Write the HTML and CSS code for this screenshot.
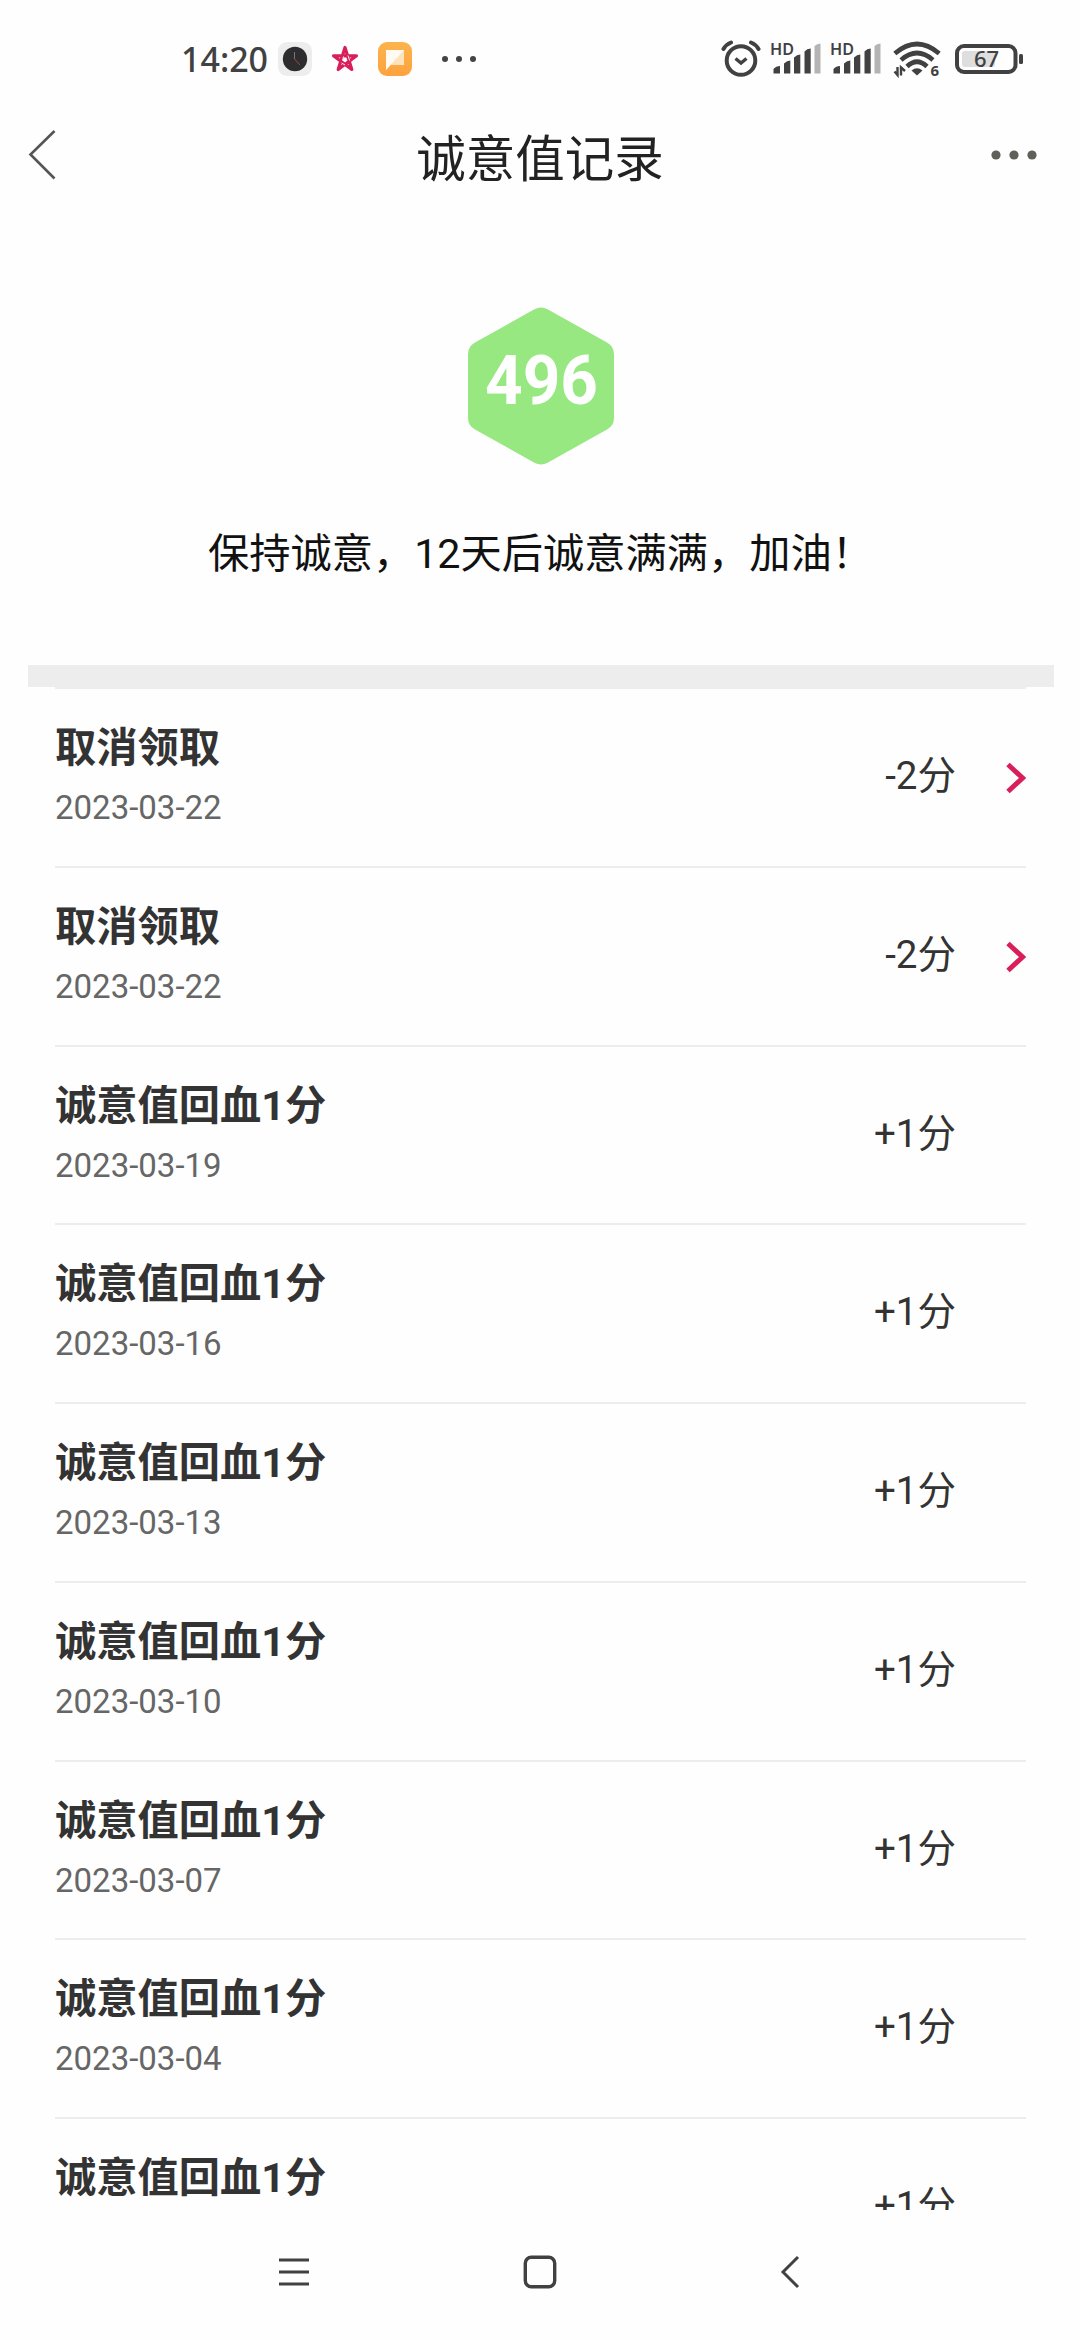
FILE: index.html
```html
<!DOCTYPE html>
<html lang="zh-CN">

<head>
    <meta charset="UTF-8">
    <meta name="viewport" content="width=device-width, initial-scale=1.0">
    <title>诚意值记录</title>
    <link rel="stylesheet" href="styles.css">
</head>

<body>
    <!-- 状态栏 -->
    <div class="statusbar">
        <div class="status-left">
            <span class="time">14:20</span>
            <svg class="app-icon" width="34" height="34" viewBox="0 0 34 34">
                <rect width="34" height="34" rx="9" fill="#ededed" />
                <circle cx="17" cy="17" r="12.2" fill="#2d2d2f" />
                <path d="M16.5 10v7" stroke="#777" stroke-width="1" fill="none" />
                <path d="M16.5 17l5.500 6" stroke="#a8433f" stroke-width="1" fill="none" />
            </svg>
            <svg class="star-icon" width="28" height="28" viewBox="0 0 28 28">
                <path d="M14 2.500L20.800 24.500L2.500 10.800H25.500L7.200 24.500Z" fill="none" stroke="#d81e5b" stroke-width="3.200" stroke-linejoin="round" />
                <path d="M12.500 11.500l-1 4M17 10.500l1.600 5M10.500 18l3.500 2" fill="none" stroke="#fff" stroke-width="0.900" />
            </svg>
            <svg class="app-icon" width="34" height="34" viewBox="0 0 34 34">
                <defs>
                    <linearGradient id="orange" x1="0" y1="0" x2="0" y2="1">
                        <stop offset="0" stop-color="#fbb44c" />
                        <stop offset="1" stop-color="#fea33e" />
                    </linearGradient>
                </defs>
                <rect width="34" height="34" rx="9" fill="url(#orange)" />
                <path d="M8 8h18v15H12.500L8 28Z" fill="#fde3bd" />
                <path d="M8 8h18L8 28Z" fill="#fffaf2" />
            </svg>
            <svg class="more-icon" width="36" height="8" viewBox="0 0 36 8">
                <g fill="#444">
                    <circle cx="4" cy="4" r="3" />
                    <circle cx="18" cy="4" r="3" />
                    <circle cx="32" cy="4" r="3" />
                </g>
            </svg>
        </div>
        <div class="status-right">
            <!-- 闹钟 -->
            <svg width="40" height="40" viewBox="0 0 40 40">
                <g fill="none" stroke="#414141" stroke-linecap="round">
                    <circle cx="20" cy="21.500" r="14.300" stroke-width="4" />
                    <path d="M14.500 19.500l5.500 4.500l5.500-4.500" stroke-width="3.400" stroke-linecap="butt" />
                    <path d="M2.500 10Q5 5.500 10 3.500M37.500 10Q35 5.500 30 3.500" stroke-width="4" />
                </g>
            </svg>
            <!-- 信号 -->
            <svg class="signal" width="50" height="40" viewBox="0 0 50 40">
                <text class="hd" x="-1" y="15.500" textLength="24" lengthAdjust="spacingAndGlyphs">HD</text>
                <g fill="#414141">
                    <path d="M2.500 34.500V30Q5 27 9 27V34.500Z" />
                    <path d="M13 34.500V24.500Q16 21.500 19.300 21.500V34.500Z" />
                    <path d="M23 34.500V18.500Q26 15.500 29.300 15.500V34.500Z" />
                    <path d="M33.500 34.500V12.500Q36 9.500 39.700 9.500V34.500Z" />
                    <path d="M43.500 34.500V7Q46 4.500 49.500 4.500V34.500Z" fill="#b4b4b4" />
                </g>
            </svg>
            <svg class="signal" width="50" height="40" viewBox="0 0 50 40">
                <text class="hd" x="-1" y="15.500" textLength="24" lengthAdjust="spacingAndGlyphs">HD</text>
                <g fill="#414141">
                    <path d="M2.500 34.500V30Q5 27 9 27V34.500Z" />
                    <path d="M13 34.500V24.500Q16 21.500 19.300 21.500V34.500Z" />
                    <path d="M23 34.500V18.500Q26 15.500 29.300 15.500V34.500Z" />
                    <path d="M33.500 34.500V12.500Q36 9.500 39.700 9.500V34.500Z" />
                    <path d="M43.500 34.500V7Q46 4.500 49.500 4.500V34.500Z" fill="#b4b4b4" />
                </g>
            </svg>
            <!-- wifi -->
            <svg class="wifi" width="48" height="40" viewBox="0 0 48 40">
                <g fill="none" stroke="#414141" stroke-width="4.600">
                    <path d="M1.800 14.500Q24 -4.500 46.200 14.500" />
                    <path d="M8 21Q24 7 40 21" />
                    <path d="M14 27.500Q24 18 34 27.500" />
                </g>
                <path d="M18.500 31.500Q24 27 29.500 31.500L24 36.500Z" fill="#414141" />
                <path d="M4.500 28v8L1.500 32.500M8 36.500v-8l4 3.500" fill="none" stroke="#414141" stroke-width="2.400" />
                <text class="wifi-num" x="37.500" y="36.800">6</text>
            </svg>
            <!-- 电量 -->
            <svg class="battery" width="69" height="32" viewBox="0 0 69 32">
                <rect x="2" y="3" width="58.500" height="26" rx="7" fill="none" stroke="#414141" stroke-width="4" />
                <rect x="7" y="8" width="33" height="16" rx="3" fill="#dedede" />
                <rect x="64" y="11" width="4" height="10" rx="1.500" fill="#414141" />
                <text class="battery-num" x="31.500" y="24" text-anchor="middle">67</text>
            </svg>
        </div>
    </div>

    <!-- 标题栏 -->
    <div class="header">
        <svg width="30" height="52" viewBox="0 0 30 52">
            <path d="M26.500 2L2.500 25.500L26.500 49.500" fill="none" stroke="#555" stroke-width="2.600" />
        </svg>
        <h1>诚意值记录</h1>
        <svg width="46" height="10" viewBox="0 0 46 10">
            <g fill="#5f6059">
                <circle cx="5" cy="5" r="4.600" />
                <circle cx="23" cy="5" r="4.600" />
                <circle cx="41" cy="5" r="4.600" />
            </g>
        </svg>
    </div>

    <!-- 当前分值 -->
    <div class="score">
        <svg width="148" height="160" viewBox="0 0 148 160">
            <path d="M67 3.500Q74 -0.500 81 3.500L140 36.500Q147 40.500 147 48V112Q147 119.500 140 123.500L81 156.500Q74 160.500 67 156.500L8 123.500Q1 119.500 1 112V48Q1 40.500 8 36.500Z" fill="#97e881" />
            <text class="score-num" x="18" y="98" textLength="113" lengthAdjust="spacingAndGlyphs">496</text>
        </svg>
        <p>保持诚意，12天后诚意满满，加油！</p>
    </div>

    <!-- 记录列表 -->
    <div class="records">
        <ul>
            <li>
                <div class="info">
                    <h2>取消领取</h2>
                    <span class="date">2023-03-22</span>
                </div>
                <span class="num">-2分</span>
                <svg class="arrow" width="20" height="32" viewBox="0 0 20 32">
                    <path d="M2 2.500L16.500 16L2 29.500" fill="none" stroke="#d81e5b" stroke-width="5" />
                </svg>
            </li>
            <li>
                <div class="info">
                    <h2>取消领取</h2>
                    <span class="date">2023-03-22</span>
                </div>
                <span class="num">-2分</span>
                <svg class="arrow" width="20" height="32" viewBox="0 0 20 32">
                    <path d="M2 2.500L16.500 16L2 29.500" fill="none" stroke="#d81e5b" stroke-width="5" />
                </svg>
            </li>
            <li>
                <div class="info">
                    <h2>诚意值回血1分</h2>
                    <span class="date">2023-03-19</span>
                </div>
                <span class="num">+1分</span>
            </li>
            <li>
                <div class="info">
                    <h2>诚意值回血1分</h2>
                    <span class="date">2023-03-16</span>
                </div>
                <span class="num">+1分</span>
            </li>
            <li>
                <div class="info">
                    <h2>诚意值回血1分</h2>
                    <span class="date">2023-03-13</span>
                </div>
                <span class="num">+1分</span>
            </li>
            <li>
                <div class="info">
                    <h2>诚意值回血1分</h2>
                    <span class="date">2023-03-10</span>
                </div>
                <span class="num">+1分</span>
            </li>
            <li>
                <div class="info">
                    <h2>诚意值回血1分</h2>
                    <span class="date">2023-03-07</span>
                </div>
                <span class="num">+1分</span>
            </li>
            <li>
                <div class="info">
                    <h2>诚意值回血1分</h2>
                    <span class="date">2023-03-04</span>
                </div>
                <span class="num">+1分</span>
            </li>
            <li>
                <div class="info">
                    <h2>诚意值回血1分</h2>
                </div>
                <span class="num">+1分</span>
            </li>
        </ul>
    </div>

    <!-- 系统导航 -->
    <div class="navbar">
        <svg width="34" height="36" viewBox="0 0 34 36">
            <path d="M2 6h30M2 18h30M2 30h30" stroke="#414141" stroke-width="3.200" />
        </svg>
        <svg width="34" height="36" viewBox="0 0 34 36">
            <rect x="2.300" y="3.300" width="29.400" height="29.400" rx="6" fill="none" stroke="#414141" stroke-width="3.400" />
        </svg>
        <svg width="34" height="36" viewBox="0 0 34 36">
            <path d="M29 3L14 18L29 33" fill="none" stroke="#414141" stroke-width="3" />
        </svg>
    </div>
</body>

</html>
```

FILE: styles.css
```css
* {
    margin: 0;
    padding: 0;
    box-sizing: border-box;
}

body {
    width: 1080px;
    height: 2340px;
    overflow: hidden;
    display: flex;
    flex-direction: column;
    background-color: #fefefe;
    font-family: Roboto, "Noto Sans CJK SC", sans-serif;
}

svg {
    display: block;
    flex: none;
}

/* 状态栏 */
.statusbar {
    height: 110px;
    padding: 0 56px 0 181px;
    display: flex;
    justify-content: space-between;
    align-items: flex-start;
}

.status-left,
.status-right {
    height: 118px;
    display: flex;
    align-items: center;
}

.time {
    width: 97px;
    font: 500 34px "Noto Sans", sans-serif;
    color: #414141;
}

.star-icon {
    margin: 0 19px;
}

.more-icon {
    margin-left: 29px;
}

.signal {
    margin-left: 10px;
}

.wifi {
    margin-left: 12px;
}

.battery {
    margin-left: 14px;
}

.hd {
    font: 600 16px "Noto Sans", sans-serif;
    fill: #414141;
}

.wifi-num {
    font: 700 15px "Noto Sans", sans-serif;
    fill: #414141;
}

.battery-num {
    font: 500 22px "Noto Sans", sans-serif;
    fill: #414141;
}

/* 标题栏 */
.header {
    height: 90px;
    padding: 0 43px 0 28px;
    display: flex;
    justify-content: space-between;
    align-items: center;
}

.header h1 {
    font-size: 49.5px;
    font-weight: 400;
    color: #222;
    padding-left: 31px;
}

/* 分值 */
.score {
    height: 465px;
    padding: 106px 0 0 1px;
    display: flex;
    flex-direction: column;
    align-items: center;
}

.score-num {
    font-size: 68px;
    font-weight: 700;
    fill: #fff;
}

.score p {
    margin-top: 57px;
    font-size: 41.25px;
    line-height: 62px;
    color: #111;
}

/* 列表，每行65*2.75=178.75px */
.records {
    height: 1545px;
    padding: 0 26px 0 28px;
    overflow: hidden;
}

.records::before {
    content: "";
    display: block;
    height: 22px;
    background-color: #ededed;
}

.records ul {
    margin: 0 28px 0 27px;
    list-style: none;
}

.records li {
    height: 178.75px;
    border-top: 2px solid #ededed;
    display: flex;
}

.info {
    flex: 1;
    padding-top: 28px;
}

.info h2 {
    font-size: 41.25px;
    line-height: 62px;
    font-weight: 700;
    color: #333;
}

.date {
    display: block;
    font-size: 33px;
    line-height: 58px;
    color: #666;
}

.num {
    width: 120px;
    margin-right: 70px;
    padding-top: 58px;
    font-size: 38.5px;
    line-height: 58px;
    text-align: right;
    color: #333;
}

.arrow {
    margin: 73px 0 0 -20px;
}

/* 底部导航 */
.navbar {
    height: 130px;
    padding: 44px 277px 0 277px;
    display: flex;
    justify-content: space-between;
}
```
